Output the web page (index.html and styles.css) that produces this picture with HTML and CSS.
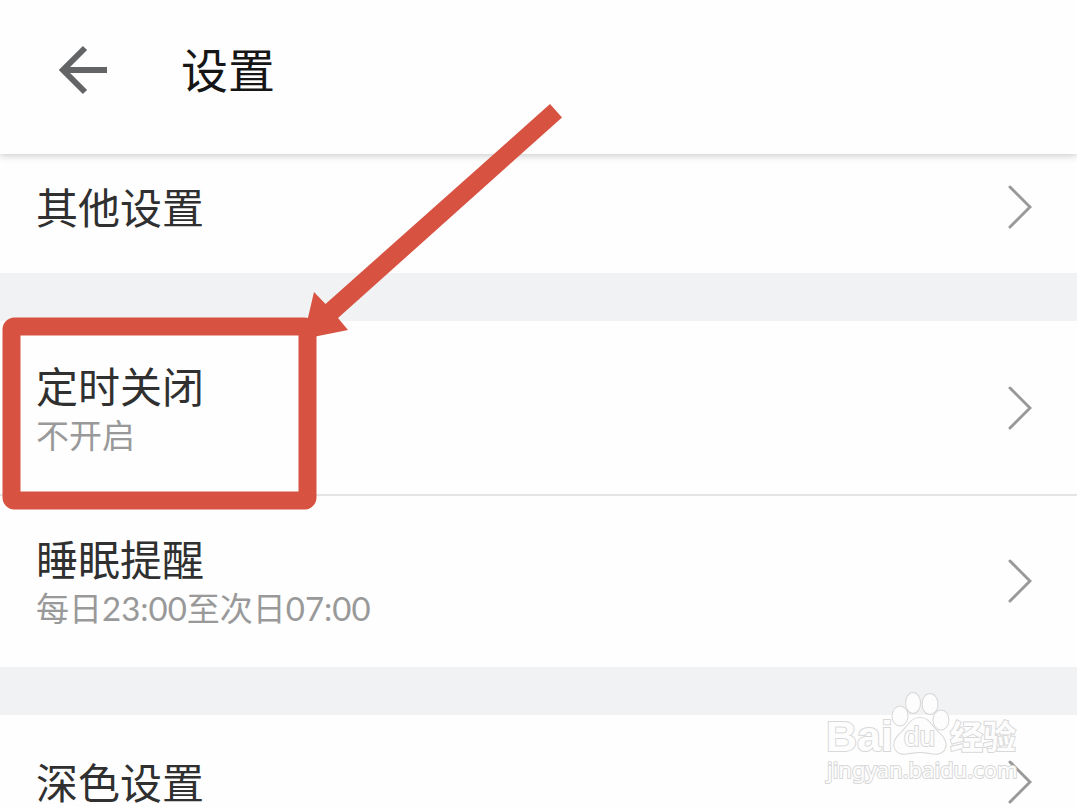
FILE: index.html
```html
<!DOCTYPE html>
<html lang="zh-CN">
<head>
<meta charset="utf-8">
<meta name="viewport" content="width=device-width, initial-scale=1">
<title>设置</title>
<link rel="stylesheet" href="styles.css">
</head>
<body>
<div class="screen">
  <header class="topbar">
    <button class="back" type="button" aria-label="返回">
      <svg width="50" height="50" viewBox="0 0 50 50" fill="none" stroke="#636466" stroke-width="6"><path d="M26 3 4 25 26 47M5 25H48"/></svg>
    </button>
    <h1 class="title">设置</h1>
  </header>
  <main class="list">
    <section class="group">
      <a class="row" href="#other">
        <span class="texts"><span class="label">其他设置</span></span>
        <svg class="chevron" viewBox="0 0 24 44"><path d="M2 2 22 22 2 42"/></svg>
      </a>
    </section>
    <section class="group">
      <a class="row row-double" href="#timer">
        <span class="texts"><span class="label">定时关闭</span><span class="detail">不开启</span></span>
        <svg class="chevron" viewBox="0 0 24 44"><path d="M2 2 22 22 2 42"/></svg>
      </a>
      <a class="row row-double" href="#sleep">
        <span class="texts"><span class="label">睡眠提醒</span><span class="detail">每日23:00至次日07:00</span></span>
        <svg class="chevron" viewBox="0 0 24 44"><path d="M2 2 22 22 2 42"/></svg>
      </a>
    </section>
    <section class="group">
      <a class="row" href="#dark">
        <span class="texts"><span class="label">深色设置</span></span>
        <svg class="chevron" viewBox="0 0 24 44"><path d="M2 2 22 22 2 42"/></svg>
      </a>
    </section>
  </main>
  <svg class="annotation" width="570" height="520" viewBox="0 0 570 520">
    <rect x="11.500" y="326.500" width="296" height="174" rx="3" fill="none" stroke="#d75241" stroke-width="18" stroke-linejoin="round"/>
    <path fill="#d75241" d="M550 104 562 117.500 338 318 348 330 303 339 314 292 325.500 304Z"/>
  </svg>
  <svg class="watermark" width="200" height="100" viewBox="0 0 200 100">
    <g class="mark">
      <text class="mark-brand" x="3" y="60">Bai</text>
      <path d="M97 27C88 27 85 35 79 41C72 47 69 54 73 59C78 66 87 61 97 61C107 61 115 66 121 59C125 53 121 46 115 41C108 35 106 27 97 27Z"/>
      <ellipse cx="77" cy="25" rx="7.500" ry="9.500"/>
      <ellipse cx="90" cy="12" rx="7" ry="10"/>
      <ellipse cx="107" cy="13" rx="7.500" ry="10"/>
      <ellipse cx="118" cy="29" rx="7.500" ry="9.500"/>
      <text class="mark-du" x="81" y="55">du</text>
      <text class="mark-cjk" x="127" y="58">经验</text>
      <text class="mark-url" x="4" y="87">jingyan.baidu.com</text>
    </g>
  </svg>
</div>
</body>
</html>
```
FILE: styles.css
```css
* { box-sizing: border-box; }
body {
  margin: 0;
  background: #fff;
  font-family: "Noto Sans CJK SC", sans-serif;
}
.screen {
  position: relative;
  height: 100vh;
  overflow: hidden;
  background: #fefefe;
}
.topbar {
  position: relative;
  z-index: 1;
  display: flex;
  align-items: center;
  gap: 72px;
  height: 154px;
  padding: 0 59px 14px;
  background: #fefefe;
  box-shadow: 0 1px 8px rgba(0, 0, 0, 0.24);
}
.back {
  display: flex;
  padding: 0;
  border: 0;
  background: none;
}
.title {
  margin: 0;
  padding-bottom: 4px;
  font-size: 47px;
  font-weight: 400;
  line-height: 64px;
  color: #161616;
}
.list {
  display: flex;
  flex-direction: column;
  gap: 48px;
  margin-top: -14px;
  background: #f1f2f4;
}
.group { background: #fefefe; }
.row {
  display: flex;
  align-items: center;
  justify-content: space-between;
  min-height: 133px;
  padding: 0 45px 0 36px;
  color: #303030;
  text-decoration: none;
}
.row-double { min-height: 173px; }
.row-double + .row-double {
  padding-bottom: 2px;
  border-top: 2px solid #e4e4e6;
}
.texts {
  display: flex;
  flex-direction: column;
  padding-bottom: 2px;
}
.label {
  font-size: 42px;
  line-height: 56px;
}
.detail {
  font-family: Lato, "Noto Sans CJK SC", sans-serif;
  font-size: 33px;
  line-height: 44px;
  color: #999;
}
.chevron {
  flex: none;
  width: 24px;
  height: 44px;
  fill: none;
  stroke: #999;
  stroke-width: 3;
  stroke-linecap: round;
}
.annotation {
  position: absolute;
  z-index: 2;
  top: 0;
  left: 0;
  pointer-events: none;
}
.watermark {
  position: absolute;
  z-index: 2;
  right: 54px;
  bottom: 16px;
  pointer-events: none;
}
.mark {
  fill: #fdfdfd;
  stroke: #d8d8d8;
  stroke-width: 2;
  paint-order: stroke;
}
.mark-brand {
  font: 700 43px "Liberation Sans", sans-serif;
}
.mark-du {
  font: 400 28px "Liberation Sans", sans-serif;
}
.mark-cjk {
  font: 700 33px "Noto Sans CJK SC", sans-serif;
}
.mark-url {
  font: 400 22px "Noto Sans", sans-serif;
}
```
